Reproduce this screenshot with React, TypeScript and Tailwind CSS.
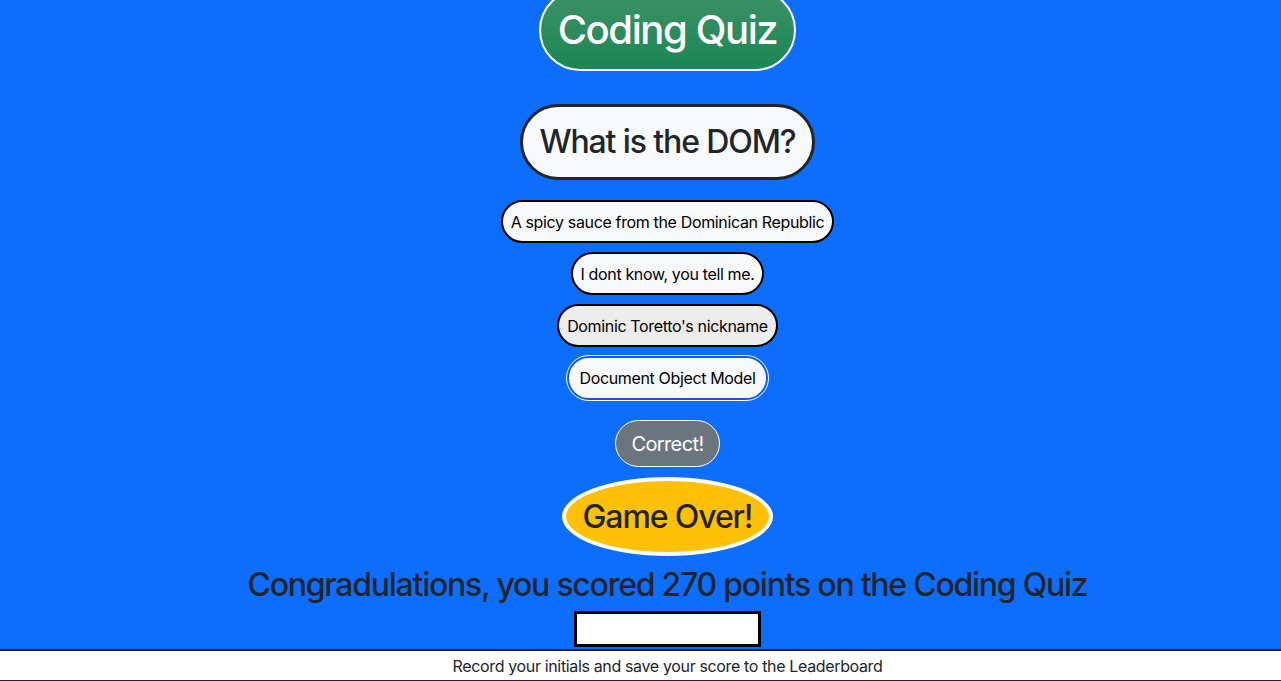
import React from 'react';

const answers = [
  { text: 'A spicy sauce from the Dominican Republic', tone: 'bg-[#f8f9fa] border-black' },
  { text: 'I dont know, you tell me.', tone: 'bg-[#f8f9fa] border-black' },
  { text: "Dominic Toretto's nickname", tone: 'bg-[#ececec] border-black' },
];

const App: React.FC = () => {
  return (
    <div className="h-[681px] overflow-hidden bg-[#0d6efd] flex flex-col font-['Inter','Liberation_Sans',sans-serif] text-[#212529]">
      <main className="flex-1 flex flex-col items-center pl-[54px]">
        <h1 className="-mt-[11px] h-[82px] px-[17px] flex items-center rounded-full border-2 border-white bg-gradient-to-b from-[#3b9166] to-[#198754] text-[40px] leading-[48px] font-medium tracking-[-0.035em] text-white">
          Coding Quiz
        </h1>

        <h2 className="mt-[33px] h-[76px] px-[16px] flex items-center rounded-full border-[3px] border-[#212529] bg-[#f8f9fa] text-[32px] leading-[38px] font-medium tracking-[-0.035em]">
          What is the DOM?
        </h2>

        <div className="mt-[20px] flex flex-col items-center gap-[9px] tracking-[-0.022em]">
          {answers.map(a => (
            <button
              key={a.text}
              className={`h-[43px] px-[8px] rounded-full border-2 ${a.tone} text-[16px] leading-[24px] text-black`}
            >
              {a.text}
            </button>
          ))}
          <button className="h-[44px] px-[10px] rounded-full border-2 border-[#0b5ed7] outline outline-1 outline-white bg-[#f8f9fa] text-[16px] leading-[24px] text-black">
            Document Object Model
          </button>
        </div>

        <div className="mt-[20px] h-[47px] px-[15px] flex items-center rounded-full border border-white bg-[#6c757d] text-[20px] leading-[30px] tracking-[-0.03em] text-white">
          Correct!
        </div>

        <div className="mt-[10px] h-[79px] w-[211px] flex items-center justify-center rounded-[50%] border-4 border-white bg-[#ffc107] text-[32px] leading-[38px] font-medium tracking-[-0.035em]">
          Game Over!
        </div>

        <p className="mt-[10px] text-[32px] leading-[38px] font-medium tracking-[-0.039em]">
          Congradulations, you scored 270 points on the Coding Quiz
        </p>

        <input
          type="text"
          className="mt-[7px] h-[36px] w-[187px] bg-white border-[3px] border-black outline-none"
        />
      </main>

      <footer className="h-[32px] shrink-0 pl-[54px] bg-white border-t-2 border-b border-[#212529] flex items-center justify-center text-[16px] leading-[24px] tracking-[-0.022em]">
        Record your initials and save your score to the Leaderboard
      </footer>
    </div>
  );
};

export default App;
